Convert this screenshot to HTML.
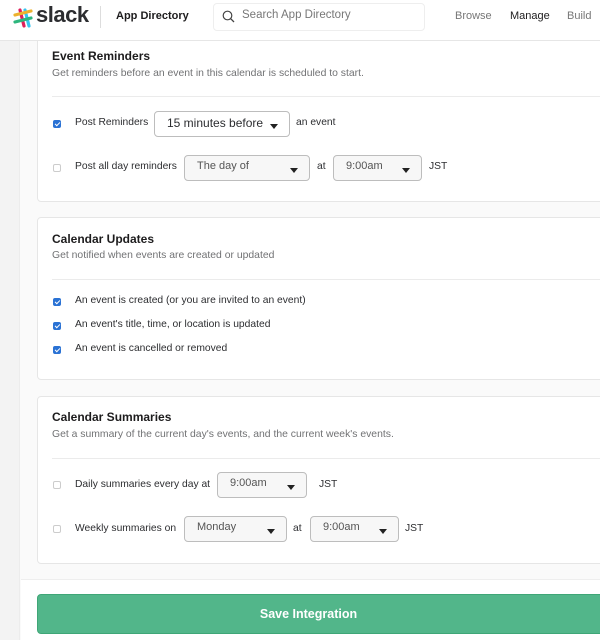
<!DOCTYPE html>
<html><head><style>
*{margin:0;padding:0;box-sizing:border-box}
body{width:600px;height:640px;overflow:hidden;font-family:"Liberation Sans",sans-serif;color:#2c2d30;background:#fafafa;position:relative;font-size:11px}
.side{position:absolute;left:0;top:0;width:20px;height:640px;background:#f3f3f3;border-right:1px solid #ececec}
.hdr{position:absolute;left:0;top:0;width:600px;height:41px;background:#fff;border-bottom:1px solid #e6e6e6;z-index:5}
.card{position:absolute;left:37px;width:580px;background:#fff;border:1px solid #e6e6e6;border-radius:4px}
.abs{position:absolute}
h3{position:absolute;left:14px;font-size:12px;font-weight:bold;color:#1d1c1d}
.sub{position:absolute;left:14px;font-size:10.4px;color:#717274}
.hr{position:absolute;left:14px;right:0;height:1px;background:#ebebeb}
.cb{position:absolute;width:8px;height:8px;border:1px solid #ccc;border-radius:2px;background:#fff}
.cb.on{background:#2a72d4;border-color:#2a72d4}
.cb.on:after{content:"";position:absolute;left:2px;top:0px;width:2px;height:4px;border:solid #fff;border-width:0 1.2px 1.2px 0;transform:rotate(45deg)}
.t{position:absolute;font-size:10.3px;color:#2c2d30;white-space:nowrap}
.sel{position:absolute;height:26px;border:1px solid #bdbdbd;border-radius:4px;background:#f7f7f7;font-size:11px;color:#555;padding:4px 0 0 12px}
.sel.w{background:#fff;color:#2c2d30;font-size:12px}
.sel:after{content:"";position:absolute;right:11px;top:12px;border:4px solid transparent;border-top:5px solid #222;border-bottom:0}
.btn{position:absolute;left:37px;top:594px;width:580px;height:40px;background:#52b68a;border:1px solid #3fa677;border-radius:4px;color:#fff;font-weight:bold;font-size:12.5px;text-align:center;line-height:38px;padding-right:37px}
.nav{font-size:11px}
</style></head><body>
<div class="side"></div>
<div class="hdr">
 <svg class="abs" style="left:12px;top:7px" width="22" height="22" viewBox="0 0 22 22">
  <g stroke-width="3.2" stroke-linecap="round">
   <line x1="8" y1="3" x2="12" y2="19" stroke="#e01e5a"/>
   <line x1="14" y1="3" x2="18" y2="19" stroke="#36c5f0" transform="translate(-1,0)"/>
   <line x1="3" y1="8" x2="19" y2="4" stroke="#ecb22e"/>
   <line x1="3" y1="15" x2="19" y2="11" stroke="#2eb67d"/>
  </g>
 </svg>
 <div class="t" style="left:36px;top:2px;font-size:22px;font-weight:bold;color:#2c2d30;letter-spacing:-0.5px">slack</div>
 <div class="abs" style="left:100px;top:6px;width:1px;height:22px;background:#ddd"></div>
 <div class="t" style="left:116px;top:10px;font-size:11px;font-weight:bold;color:#1d1c1d">App Directory</div>
 <div class="abs" style="left:213px;top:3px;width:212px;height:28px;border:1px solid #eee;border-radius:4px;background:#fff"></div>
 <svg class="abs" style="left:222px;top:10px" width="13" height="13" viewBox="0 0 13 13"><circle cx="5.5" cy="5.5" r="4.3" fill="none" stroke="#444" stroke-width="1.2"/><line x1="8.7" y1="8.7" x2="12" y2="12" stroke="#444" stroke-width="1.3"/></svg>
 <div class="t" style="left:242px;top:9px;font-size:11.5px;color:#777">Search App Directory</div>
 <div class="t nav" style="left:455px;top:10px;color:#777">Browse</div>
 <div class="t nav" style="left:510px;top:10px;color:#1d1c1d">Manage</div>
 <div class="t nav" style="left:567px;top:10px;color:#777">Build</div>
</div>

<div class="card" style="top:10px;height:192px">
 <h3 style="top:38px">Event Reminders</h3>
 <div class="sub" style="top:57px">Get reminders before an event in this calendar is scheduled to start.</div>
 <div class="hr" style="top:85px"></div>
 <div class="cb on" style="left:15px;top:109px"></div>
 <div class="t" style="left:37px;top:106px">Post Reminders</div>
 <div class="sel w" style="left:116px;top:100px;width:136px">15 minutes before</div>
 <div class="t" style="left:258px;top:106px">an event</div>
 <div class="cb" style="left:15px;top:153px"></div>
 <div class="t" style="left:37px;top:150px">Post all day reminders</div>
 <div class="sel" style="left:146px;top:144px;width:126px">The day of</div>
 <div class="t" style="left:279px;top:150px">at</div>
 <div class="sel" style="left:295px;top:144px;width:89px">9:00am</div>
 <div class="t" style="left:391px;top:150px">JST</div>
</div>

<div class="card" style="top:217px;height:163px">
 <h3 style="top:14px">Calendar Updates</h3>
 <div class="sub" style="top:32px">Get notified when events are created or updated</div>
 <div class="hr" style="top:61px"></div>
 <div class="cb on" style="left:15px;top:80px"></div>
 <div class="t" style="left:37px;top:77px">An event is created (or you are invited to an event)</div>
 <div class="cb on" style="left:15px;top:104px"></div>
 <div class="t" style="left:37px;top:101px">An event's title, time, or location is updated</div>
 <div class="cb on" style="left:15px;top:128px"></div>
 <div class="t" style="left:37px;top:125px">An event is cancelled or removed</div>
</div>

<div class="card" style="top:396px;height:168px">
 <h3 style="top:13px">Calendar Summaries</h3>
 <div class="sub" style="top:32px">Get a summary of the current day's events, and the current week's events.</div>
 <div class="hr" style="top:61px"></div>
 <div class="cb" style="left:15px;top:84px"></div>
 <div class="t" style="left:37px;top:82px">Daily summaries every day at</div>
 <div class="sel" style="left:179px;top:75px;width:90px">9:00am</div>
 <div class="t" style="left:281px;top:82px">JST</div>
 <div class="cb" style="left:15px;top:128px"></div>
 <div class="t" style="left:37px;top:126px">Weekly summaries on</div>
 <div class="sel" style="left:146px;top:119px;width:103px">Monday</div>
 <div class="t" style="left:255px;top:126px">at</div>
 <div class="sel" style="left:272px;top:119px;width:89px">9:00am</div>
 <div class="t" style="left:367px;top:126px">JST</div>
</div>

<div class="abs" style="left:21px;top:579px;width:579px;height:61px;background:#fff;border-top:1px solid #eee"></div>
<div class="btn">Save Integration</div>
</body></html>
